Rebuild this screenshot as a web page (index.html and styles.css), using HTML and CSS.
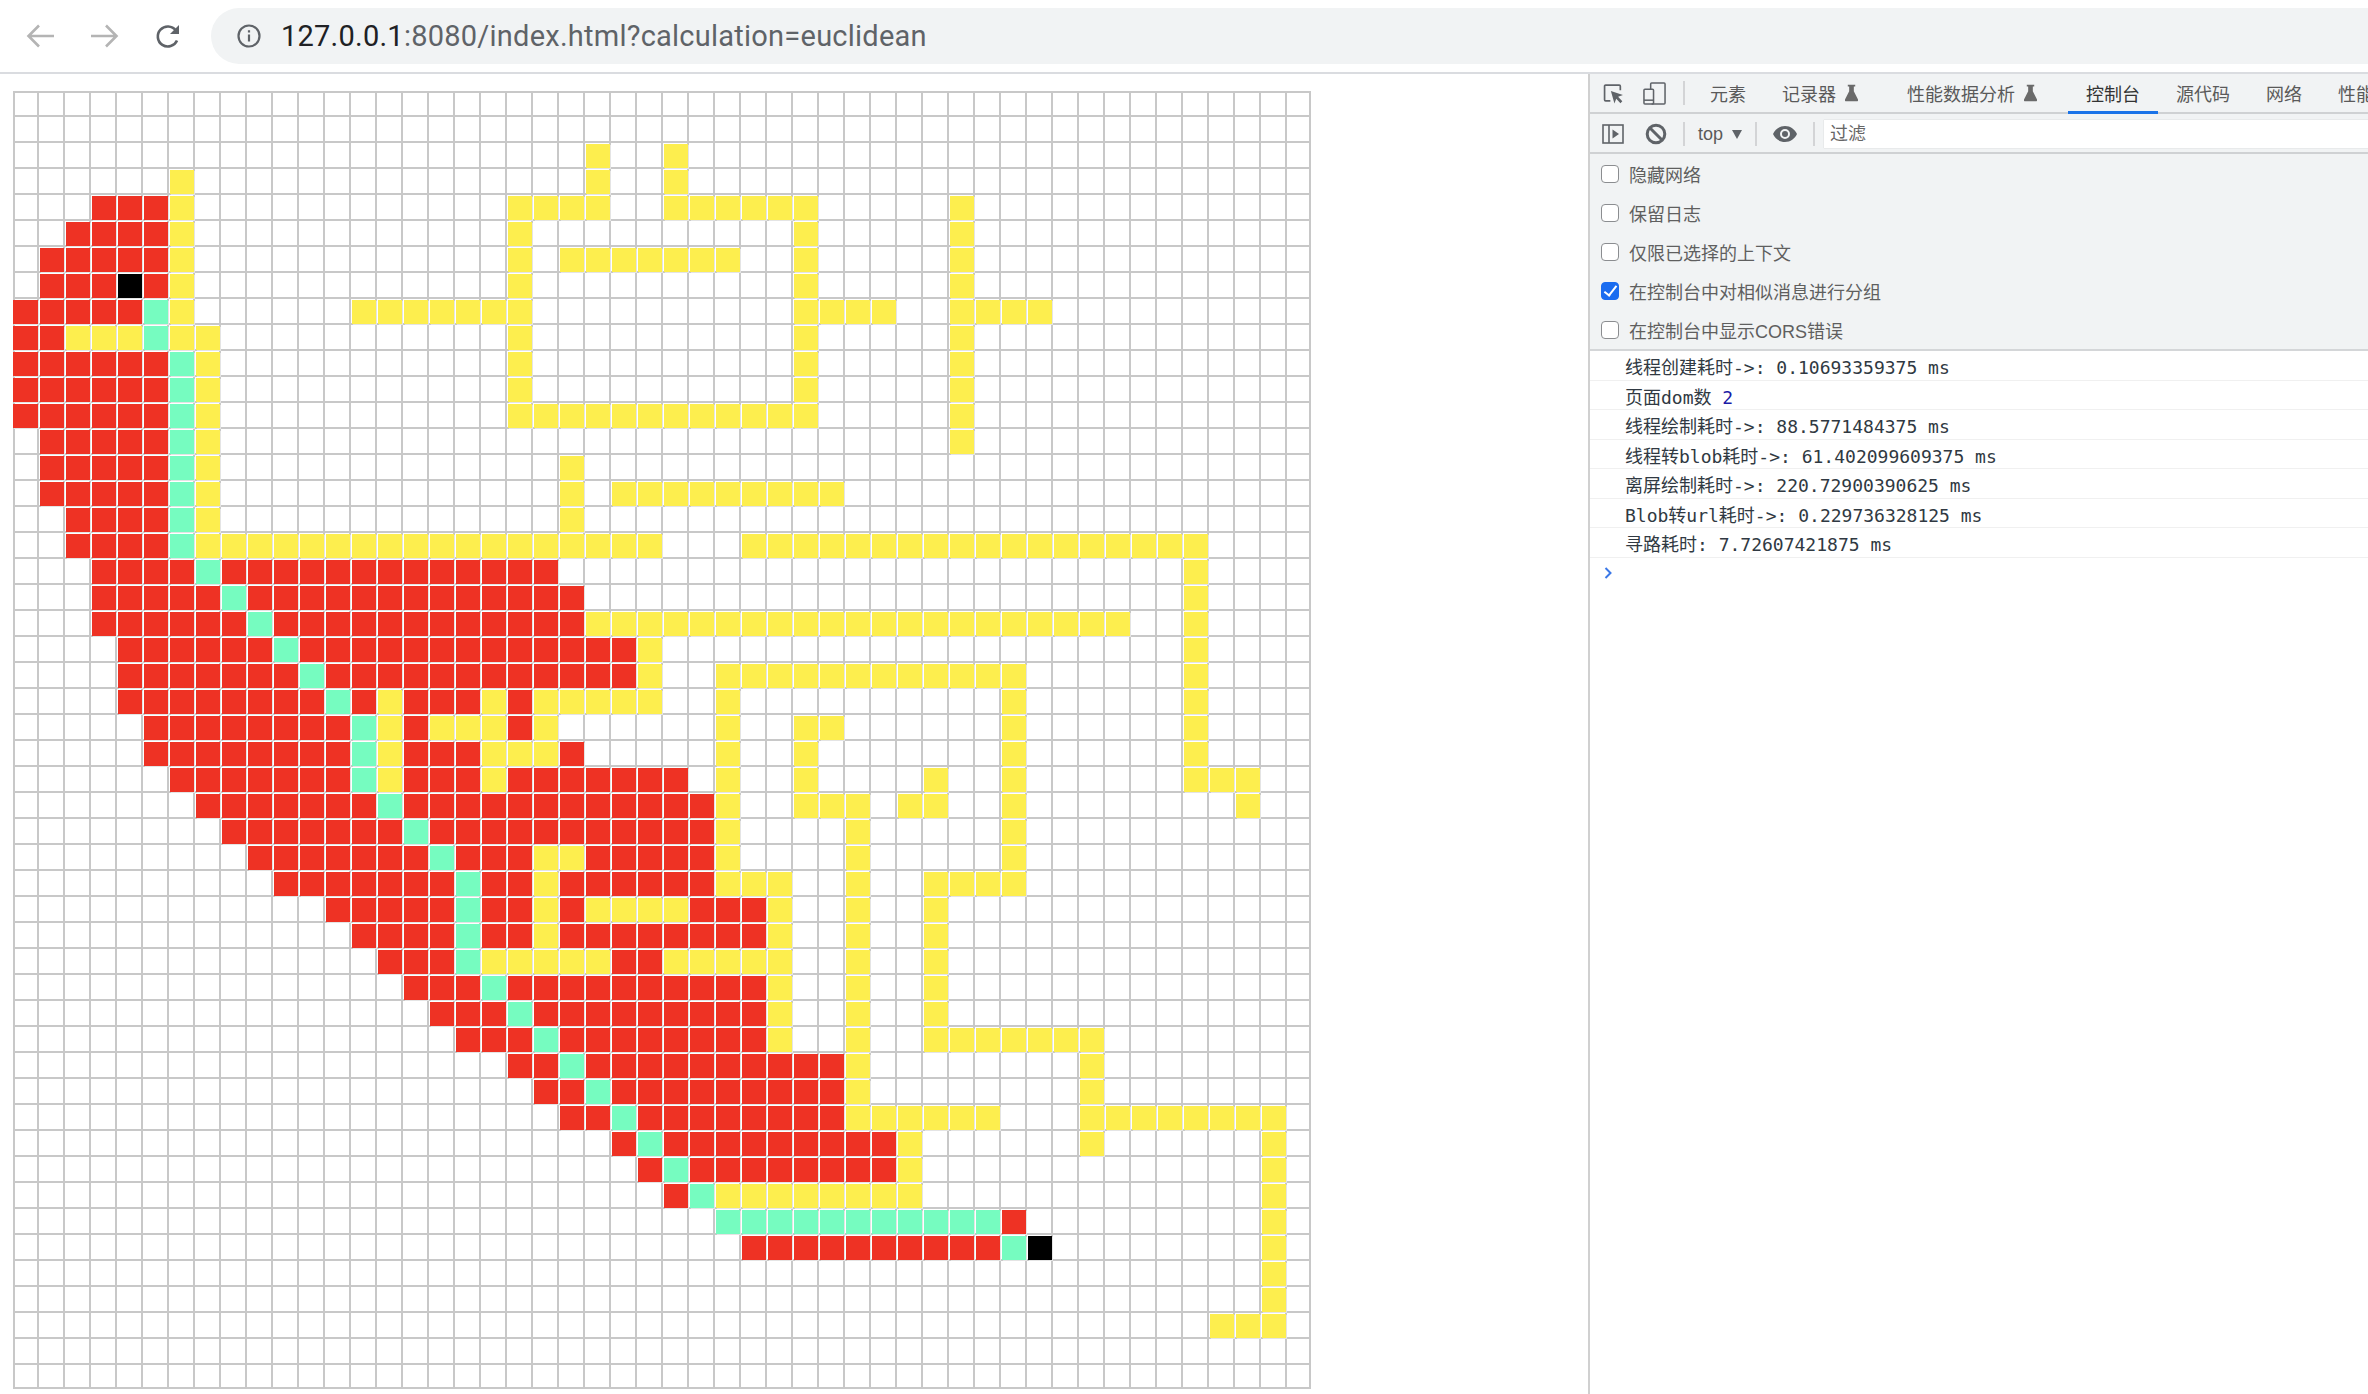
FILE: index.html
```html
<!DOCTYPE html>
<html lang="zh-CN">
<head>
    <meta charset="UTF-8">
    <title>Pathfinding</title>
    <link rel="stylesheet" href="styles.css">
</head>
<body>

    <header class="browser-bar">
        <svg class="nav-icon nav-off" viewBox="0 0 30 26"><path d="M28 13H3M13 2.5 2.5 13 13 23.5"/></svg>
        <svg class="nav-icon nav-off nav-forward" viewBox="0 0 30 26"><path d="M2 13h25M17 2.5 27.5 13 17 23.5"/></svg>
        <svg class="nav-icon nav-reload" viewBox="0 0 28 26"><path d="M23 17.5a10 10 0 1 1-1.2-10"/><path class="solid" d="M25 2v9h-9z"/></svg>
        <div class="omnibox">
            <svg class="info-icon" viewBox="0 0 24 24"><circle cx="12" cy="12" r="10.5"/><path d="M12 10.5v7M12 6.2v2.4"/></svg>
            <span class="url"><span class="url-host">127.0.0.1</span>:8080/index.html?calculation=euclidean</span>
        </div>
    </header>

    <div class="main">
        <div class="page">
            <div class="grid" id="grid"></div>
        </div>

        <aside class="devtools">
            <div class="bar tab-bar">
                <svg class="tool tool-inspect" viewBox="0 0 20 20"><path d="M7 17H2.5a1 1 0 0 1-1-1V3a1 1 0 0 1 1-1h13a1 1 0 0 1 1 1v4"/><path class="solid" d="M7.5 7.5 19 11.5l-4.6 1.7 4 4.2-1.8 1.8-4-4.2-1.7 4.6z"/></svg>
                <svg class="tool tool-device" viewBox="0 0 24 24"><path d="M8 8V2.5a1 1 0 0 1 1-1h13a1 1 0 0 1 1 1v20a1 1 0 0 1-1 1H9"/><rect x="1" y="8" width="10" height="15.5" rx="1"/><path d="M1 19.5h10"/></svg>
                <span class="sep sep-tabs"></span>
                <span class="tab">元素</span>
                <span class="tab tab-flask">记录器<svg class="flask" viewBox="0 0 14 18"><path d="M3 0h8v2H9.5v5L14 16a1.3 1.3 0 0 1-1.2 2H1.2A1.3 1.3 0 0 1 0 16l4.5-9V2H3z"/></svg></span>
                <span class="tab tab-flask">性能数据分析<svg class="flask" viewBox="0 0 14 18"><path d="M3 0h8v2H9.5v5L14 16a1.3 1.3 0 0 1-1.2 2H1.2A1.3 1.3 0 0 1 0 16l4.5-9V2H3z"/></svg></span>
                <span class="tab tab-active">控制台</span>
                <span class="tab">源代码</span>
                <span class="tab">网络</span>
                <span class="tab">性能</span>
            </div>

            <div class="bar filter-bar">
                <svg class="tool tool-sidebar" viewBox="0 0 22 20"><rect x="1" y="1" width="20" height="18"/><path d="M7 1v18"/><path class="solid" d="M10.5 5.5 17 10l-6.500 4.500z"/></svg>
                <svg class="tool tool-block" viewBox="0 0 22 22"><circle cx="11" cy="11" r="8.800"/><path d="M5 5l12 12"/></svg>
                <span class="sep sep-top"></span>
                <span class="context">top<span class="caret"></span></span>
                <span class="sep sep-eye"></span>
                <svg class="tool tool-eye" viewBox="0 0 24 16"><path class="solid" d="M12 0C6.500 0 2.200 3.300 0 8c2.200 4.700 6.500 8 12 8s9.800-3.300 12-8C21.800 3.300 17.500 0 12 0zm0 13a5 5 0 1 1 0-10 5 5 0 0 1 0 10zm0-8a3 3 0 1 0 0 6 3 3 0 0 0 0-6z"/></svg>
                <span class="sep sep-filter"></span>
                <div class="filter-input">过滤</div>
            </div>

            <div class="options">
                <label class="option"><input type="checkbox">隐藏网络</label>
                <label class="option"><input type="checkbox">保留日志</label>
                <label class="option"><input type="checkbox">仅限已选择的上下文</label>
                <label class="option"><input type="checkbox" checked>在控制台中对相似消息进行分组</label>
                <label class="option"><input type="checkbox">在控制台中显示CORS错误</label>
            </div>

            <div class="console">
                <div class="message">线程创建耗时-&gt;: 0.10693359375 ms</div>
                <div class="message">页面dom数 <span class="number">2</span></div>
                <div class="message">线程绘制耗时-&gt;: 88.5771484375 ms</div>
                <div class="message">线程转blob耗时-&gt;: 61.402099609375 ms</div>
                <div class="message">离屏绘制耗时-&gt;: 220.72900390625 ms</div>
                <div class="message">Blob转url耗时-&gt;: 0.229736328125 ms</div>
                <div class="message">寻路耗时: 7.72607421875 ms</div>
                <div class="prompt"><svg viewBox="0 0 8 12"><path d="M1.500 1 6.500 6l-5 5"/></svg></div>
            </div>
        </aside>
    </div>

    <script src="script.js"></script>
</body>
</html>
```

FILE: styles.css
```css
* {
    box-sizing: border-box;
}
html, body {
    margin: 0;
    height: 100%;
    overflow: hidden;
}
body {
    background: #fff;
    font-family: 'Liberation Sans', 'Noto Sans CJK SC', sans-serif;
    color: #5a5a5a;
}
svg {
    display: block;
    flex: none;
    fill: none;
}

/* browser toolbar */
.browser-bar {
    display: flex;
    align-items: center;
    height: 74px;
    padding-left: 26px;
    border-bottom: 2px solid #dadce0;
}
.nav-icon {
    width: 30px;
    height: 26px;
    stroke-width: 2.6;
    stroke: #5f6368;
}
.nav-off {
    stroke: #b4b4b4;
}
.nav-forward {
    margin-left: 33px;
}
.nav-reload {
    width: 28px;
    margin-left: 35px;
}
.nav-reload .solid {
    fill: #5f6368;
    stroke: none;
}
.omnibox {
    display: flex;
    align-items: center;
    flex: 1;
    height: 56px;
    margin-left: 29px;
    padding-left: 26px;
    background: #f1f3f4;
    border-radius: 28px 0 0 28px;
}
.info-icon {
    width: 24px;
    height: 24px;
    stroke: #5f6368;
    stroke-width: 2.2;
}
.url {
    margin-left: 20px;
    font-family: Roboto, sans-serif;
    font-size: 29px;
    letter-spacing: 0.24px;
    color: #5f6368;
}
.url-host {
    color: #202124;
}

/* left side, the map */
.main {
    display: flex;
    height: 1320px;
}
.page {
    flex: 1;
    padding: 17px 0 0 13px;
}
.grid {
    display: grid;
    grid-template-columns: 24px repeat(48, 26px) 24px;
    grid-template-rows: 24px repeat(48, 26px) 24px;
    width: 1298px;
    height: 1298px;
    border-top: 2px solid #c8c8c8;
    border-left: 2px solid #c8c8c8;
}
.cell {
    position: relative;
    border-right: 2px solid #c8c8c8;
    border-bottom: 2px solid #c8c8c8;
}
.cell[class*="fill-"]::after {
    content: "";
    position: absolute;
    top: 1px;
    left: 1px;
    width: 24px;
    height: 24px;
    background: var(--fill);
    box-shadow: 1px 1px 0 rgba(255, 255, 255, 0.5);
}
/* the first column runs over the outer line */
.cell:nth-child(50n + 1)[class*="fill-"]::after {
    left: -2px;
    width: 25px;
}
.fill-red {
    --fill: #ee3224;
}
.fill-yellow {
    --fill: #fdee4e;
}
.fill-green {
    --fill: #76fcc0;
}
.fill-black {
    --fill: #000;
}

/* devtools */
.devtools {
    width: 780px;
    flex: none;
    overflow: hidden;
    border-left: 2px solid #d0d0d0;
    background: #fff;
}
.bar {
    display: flex;
    align-items: center;
    background: #f1f3f4;
    border-bottom: 2px solid #cfd1d3;
    white-space: nowrap;
    font-size: 18px;
}
.tab-bar {
    height: 40px;
    padding-left: 13px;
}
.filter-bar {
    height: 40px;
    padding: 2px 0 0 12px;
}
.tool {
    stroke: #5f6368;
    stroke-width: 1.6;
}
.tool .solid {
    fill: #5f6368;
    stroke: none;
}
.tool-inspect {
    width: 21px;
    height: 21px;
}
.tool-device {
    width: 23px;
    height: 24px;
    margin-left: 19px;
}
.tool-sidebar {
    width: 22px;
    height: 20px;
}
.tool-block {
    width: 22px;
    height: 22px;
    margin-left: 21px;
    stroke-width: 3;
}
.tool-eye {
    width: 24px;
    height: 16px;
    margin-left: 16px;
}
.tool-eye .solid {
    fill-rule: evenodd;
}
.sep {
    width: 2px;
    height: 24px;
    flex: none;
    background: #d3d4d6;
}
.sep-tabs {
    margin: 0 7px 0 17px;
}
.sep-top {
    margin: 0 13px 0 16px;
}
.sep-eye {
    margin-left: 13px;
}
.sep-filter {
    margin: 0 9px 0 16px;
}
.tab {
    display: flex;
    align-items: center;
    height: 100%;
    padding: 0 18px;
}
.tab-flask {
    padding-right: 0;
}
.flask {
    width: 13px;
    height: 18px;
    margin: 0 31px 0 9px;
    fill: #6a6a6a;
}
.tab-active {
    position: relative;
    color: #333;
}
.tab-active::after {
    content: "";
    position: absolute;
    left: 0;
    right: 0;
    bottom: -2px;
    height: 3px;
    background: #1a73e8;
}
.context {
    display: flex;
    align-items: center;
    font-size: 18px;
}
.caret {
    width: 0;
    height: 0;
    margin-left: 9px;
    border-left: 5.500px solid transparent;
    border-right: 5.500px solid transparent;
    border-top: 9px solid #5f6368;
}
.filter-input {
    flex: 1;
    height: 28px;
    padding-left: 6px;
    line-height: 29px;
    background: #fff;
    color: #666;
    box-shadow: 0 0 1px #bbb;
}
.options {
    height: 197px;
    background: #f1f3f4;
    border-bottom: 2px solid #d4d6d8;
}
.option {
    display: flex;
    align-items: center;
    height: 39px;
    padding-left: 11px;
    font-size: 18px;
    color: #5f5f5f;
}
.option input {
    appearance: none;
    position: relative;
    width: 18px;
    height: 18px;
    margin: 0 10px 0 0;
    background: #fff;
    border: 1.500px solid #8b8d90;
    border-radius: 4px;
}
.option input:checked {
    background: #1a6cf0;
    border-color: #1a6cf0;
}
.option input:checked::after {
    content: "";
    position: absolute;
    left: 4.500px;
    top: 0.500px;
    width: 5px;
    height: 11px;
    border-right: 2.500px solid #fff;
    border-bottom: 2.500px solid #fff;
    transform: rotate(38deg);
}
.console {
    font-family: 'DejaVu Sans Mono', 'Noto Sans CJK SC', monospace;
    font-size: 18px;
    color: #303942;
}
.message {
    height: 29.500px;
    padding-left: 35px;
    line-height: 33px;
    border-bottom: 1.500px solid #f0f0f0;
    white-space: pre;
}
.number {
    color: #1a1aa6;
}
.prompt {
    padding: 9px 0 0 14px;
}
.prompt svg {
    width: 8px;
    height: 12px;
    stroke: #3b78e7;
    stroke-width: 2;
}
```

FILE: script.js
```js
// red = visited, yellow = wall, green = path, black = start and end
const fills = { R: 'fill-red', Y: 'fill-yellow', G: 'fill-green', K: 'fill-black' };

const rows = [
    '',
    '',
    'Y22 Y25',
    'Y6 Y22 Y25',
    'R3-5 Y6 Y19-22 Y25-30 Y36',
    'R2-5 Y6 Y19 Y30 Y36',
    'R1-5 Y6 Y19 Y21-27 Y30 Y36',
    'R1-3 K4 R5 Y6 Y19 Y30 Y36',
    'R0-4 G5 Y6 Y13-19 Y30-33 Y36-39',
    'R0-1 Y2-4 G5 Y6-7 Y19 Y30 Y36',
    'R0-5 G6 Y7 Y19 Y30 Y36',
    'R0-5 G6 Y7 Y19 Y30 Y36',
    'R0-5 G6 Y7 Y19-30 Y36',
    'R1-5 G6 Y7 Y36',
    'R1-5 G6 Y7 Y21',
    'R1-5 G6 Y7 Y21 Y23-31',
    'R2-5 G6 Y7 Y21',
    'R2-5 G6 Y7-24 Y28-45',
    'R3-6 G7 R8-20 Y45',
    'R3-7 G8 R9-21 Y45',
    'R3-8 G9 R10-21 Y22-42 Y45',
    'R4-9 G10 R11-23 Y24 Y45',
    'R4-10 G11 R12-23 Y24 Y27-38 Y45',
    'R4-11 G12 R13 Y14 R15-17 Y18 R19 Y20-24 Y27 Y38 Y45',
    'R5-12 G13 Y14 R15 Y16-18 R19 Y20 Y27 Y30-31 Y38 Y45',
    'R5-12 G13 Y14 R15-17 Y18-20 R21 Y27 Y30 Y38 Y45',
    'R6-12 G13 Y14 R15-17 Y18 R19-25 Y27 Y30 Y35 Y38 Y45-47',
    'R7-13 G14 R15-26 Y27 Y30-32 Y34-35 Y38 Y47',
    'R8-14 G15 R16-26 Y27 Y32 Y38',
    'R9-15 G16 R17-19 Y20-21 R22-26 Y27 Y32 Y38',
    'R10-16 G17 R18-19 Y20 R21-26 Y27-29 Y32 Y35-38',
    'R12-16 G17 R18-19 Y20 R21 Y22-25 R26-28 Y29 Y32 Y35',
    'R13-16 G17 R18-19 Y20 R21-28 Y29 Y32 Y35',
    'R14-16 G17 Y18-22 R23-24 Y25-29 Y32 Y35',
    'R15-17 G18 R19-28 Y29 Y32 Y35',
    'R16-18 G19 R20-28 Y29 Y32 Y35',
    'R17-19 G20 R21-28 Y29 Y32 Y35-41',
    'R19-20 G21 R22-31 Y32 Y41',
    'R20-21 G22 R23-31 Y32 Y41',
    'R21-22 G23 R24-31 Y32-37 Y41-48',
    'R23 G24 R25-33 Y34 Y41 Y48',
    'R24 G25 R26-33 Y34 Y48',
    'R25 G26 Y27-34 Y48',
    'G27-37 R38 Y48',
    'R28-37 G38 K39 Y48',
    'Y48',
    'Y48',
    'Y46-48',
    '',
    ''
];

function parseRow(spec) {
    const cols = {};
    spec.split(' ').filter(Boolean).forEach(part => {
        const [from, to] = part.slice(1).split('-').map(Number);
        for (let c = from; c <= (to === undefined ? from : to); c++) {
            cols[c] = fills[part[0]];
        }
    });
    return cols;
}

const grid = document.getElementById('grid');
rows.forEach(spec => {
    const cols = parseRow(spec);
    for (let c = 0; c < 50; c++) {
        const cell = document.createElement('div');
        cell.className = cols[c] ? 'cell ' + cols[c] : 'cell';
        grid.appendChild(cell);
    }
});
```
